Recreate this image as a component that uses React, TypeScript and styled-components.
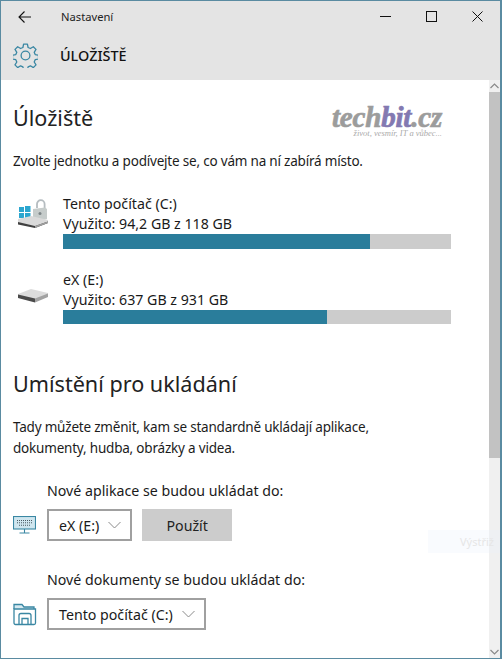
import React from "react"
import styled, { createGlobalStyle } from "styled-components"

const Global = createGlobalStyle`
  html, body {
    margin: 0;
    padding: 0;
    background: #fff;
  }
`

const Win = styled.div`
  width: 502px;
  height: 659px;
  box-sizing: border-box;
  border: 1px solid #5a8ba1;
  border-right-width: 2px;
  display: flex;
  flex-direction: column;
  overflow: hidden;
  font-family: "Noto Sans", "Open Sans", sans-serif;
  color: #1a1a1a;
  position: relative;
`

const Head = styled.div`
  height: 79px;
  flex: none;
  background: #e4e4e4;
  display: flex;
  flex-direction: column;
`

const TitleBar = styled.div`
  height: 31px;
  display: flex;
  align-items: center;
  padding-left: 17px;
`

const AppName = styled.span`
  font-size: 11.2px;
  margin-left: 30px;
  color: #222;
`

const WinButtons = styled.div`
  margin-left: auto;
  display: flex;
  gap: 35px;
  padding-right: 17px;
  align-items: center;
`

const PageBar = styled.div`
  flex: 1;
  display: flex;
  align-items: center;
  padding: 0 0 2px 12px;
`

const PageTitle = styled.span`
  font-size: 14.4px;
  font-weight: 500;
  margin-left: 22px;
  color: #111;
`

const Body = styled.div`
  flex: 1;
  display: flex;
  min-height: 0;
`

const Content = styled.div`
  flex: 1;
  padding: 23px 0 0 12px;
  position: relative;
`

const H1 = styled.h1<{ $top?: number }>`
  margin: ${(p) => p.$top ?? 0}px 0 0;
  font-size: 21.6px;
  font-weight: 400;
  line-height: 30px;
  color: #222;
`

const Para = styled.p`
  margin: 18px 0 0;
  font-size: 13.5px;
  letter-spacing: -0.2px;
  line-height: 21px;
  color: #1c1c1c;
`

const Drives = styled.div`
  margin-top: 22px;
  display: flex;
  flex-direction: column;
  gap: 21px;
`

const Drive = styled.div`
  display: flex;
`

const DriveIconBox = styled.div<{ $top: number }>`
  width: 50px;
  flex: none;
  padding: ${(p) => p.$top}px 0 0 5px;
  box-sizing: border-box;
`

const DriveInfo = styled.div`
  width: 388px;
`

const DriveLine = styled.div`
  font-size: 14.2px;
  line-height: 20px;
`

const Bar = styled.div`
  height: 14.5px;
  background: #cccccc;
`

const Fill = styled.div`
  height: 100%;
  background: #2a7d9b;
`

const Setting = styled.div<{ $top: number }>`
  margin-top: ${(p) => p.$top}px;
  display: grid;
  grid-template-columns: 34px auto;
  row-gap: 8px;
  align-items: center;
`

const SettingLabel = styled.div`
  grid-column: 2;
  font-size: 14.2px;
  line-height: 20px;
`

const Controls = styled.div`
  grid-column: 2;
  display: flex;
  gap: 10px;
`

const Select = styled.div`
  height: 32px;
  box-sizing: border-box;
  border: 2px solid #a0a0a0;
  display: flex;
  align-items: center;
  padding: 0 9px 0 10px;
  gap: 9px;
  font-size: 14.2px;
`

const Apply = styled.div`
  width: 90px;
  height: 32px;
  background: #cccccc;
  display: flex;
  align-items: center;
  justify-content: center;
  font-size: 14.2px;
  color: #222;
`

const Ghost = styled.div`
  position: absolute;
  right: -11px;
  top: 450px;
  width: 72px;
  height: 23px;
  background: rgba(232, 240, 252, 0.25);
  font-size: 11px;
  line-height: 23px;
  color: #e6e6e6;
  padding-left: 32px;
  box-sizing: border-box;
  white-space: nowrap;
`

const Logo = styled.div`
  position: absolute;
  top: 27px;
  left: 331px;
  font-family: "Liberation Serif", serif;
  font-weight: 700;
  font-style: italic;
  font-size: 29px;
  line-height: 21px;
  letter-spacing: -0.2px;
  color: #9c9c9c;
  -webkit-text-stroke: 0.7px currentColor;
  em {
    color: #8379b1;
  }
`

const Slogan = styled.div`
  font-family: "Liberation Serif", serif;
  font-weight: 400;
  font-size: 8.5px;
  line-height: 9px;
  letter-spacing: 0;
  text-align: right;
  color: #aaa;
  -webkit-text-stroke: 0;
  margin-top: 1px;
`

const Scroll = styled.div`
  width: 11px;
  flex: none;
  background: #f0f0f0;
  display: flex;
  flex-direction: column;
  align-items: stretch;
`

const ScrollCap = styled.div`
  height: 12px;
  flex: none;
  display: flex;
  align-items: center;
  justify-content: center;
`

const Thumb = styled.div`
  height: 366px;
  flex: none;
  background: #c2c2c2;
`

const Spacer = styled.div`
  flex: 1;
`

const Stroke = styled.svg`
  display: block;
  flex: none;
`

function Chevron({ up = false, color = "#8a8a8a" }: { up?: boolean; color?: string }) {
  return (
    <Stroke width="9" height="6" viewBox="0 0 9 6" fill="none" stroke={color} strokeWidth="1.2">
      <path d={up ? "M0.5 5L4.5 1L8.5 5" : "M0.5 1L4.5 5L8.5 1"} />
    </Stroke>
  )
}

function SelectChevron() {
  return (
    <Stroke width="13" height="8" viewBox="0 0 13 8" fill="none" stroke="#8a8a8a" strokeWidth="1">
      <path d="M0.5 1L6.5 7L12.5 1" />
    </Stroke>
  )
}

function BackArrow() {
  return (
    <Stroke width="13" height="12" viewBox="0 0 13 12" fill="none" stroke="#111" strokeWidth="1.1">
      <path d="M13 6H1M6.5 0.5L1 6L6.5 11.5" />
    </Stroke>
  )
}

function Gear() {
  return (
    <Stroke width="25" height="25" viewBox="0 0 25 25" fill="none" stroke="#3a87a3" strokeWidth="1.3" strokeLinejoin="round">
      <path d="M10.6 1.2h3.8l.7 3.3 2.3 1 2.9-1.8 2.7 2.7-1.8 2.9 1 2.3 3.3.7v3.7l-3.3.7-1 2.3 1.8 2.9-2.7 2.7-2.9-1.8-2.3 1-.7 3.2h-3.8l-.7-3.2-2.3-1-2.9 1.8-2.7-2.7 1.8-2.9-1-2.3-3.3-.7v-3.7l3.3-.7 1-2.3-1.8-2.9 2.7-2.7 2.9 1.8 2.3-1z" />
      <circle cx="12.5" cy="12.5" r="4.4" />
    </Stroke>
  )
}

function SystemDrive() {
  return (
    <Stroke width="30" height="29" viewBox="0 0 30 29">
      <rect x="1" y="8" width="5" height="5" fill="#2ba6cf" />
      <rect x="7" y="7" width="5.5" height="6" fill="#2ba6cf" />
      <rect x="1" y="14" width="5" height="5" fill="#2ba6cf" />
      <rect x="7" y="14" width="5.5" height="6" fill="#2ba6cf" />
      <path d="M19 9V5a3.8 3.8 0 0 1 7.6 0v4" fill="none" stroke="#b5bcc0" strokeWidth="1.8" />
      <path d="M15 10L27 8.5L29 10V20L18 23L15 21Z" fill="#c6cccb" />
      <circle cx="22" cy="14.5" r="1.5" fill="#7d8588" />
      <path d="M0 20L13 17L30 21V23L17 27L0 24Z" fill="#dadada" />
      <path d="M0 23L17 27L30 22.5V24L17 29L0 25.5Z" fill="#404040" />
      <path d="M17 27L30 22.5V24L17 29Z" fill="#a0a0a0" />
    </Stroke>
  )
}

function PlainDrive() {
  return (
    <Stroke width="30" height="15" viewBox="0 0 30 15">
      <path d="M0 6L13 1L30 5V8L17 13L0 9Z" fill="#dcdcdc" />
      <path d="M0 6.5L17 10.5L17 14.5L0 10Z" fill="#4a4a4a" />
      <path d="M17 10.5L30 5.5V9L17 14.5Z" fill="#a2a2a2" />
    </Stroke>
  )
}

function Monitor() {
  return (
    <Stroke width="23" height="18" viewBox="0 0 23 18" fill="none" stroke="#3a87a3" strokeWidth="1.1">
      <rect x="0.5" y="0.5" width="22" height="12.5" fill="#cfe6ef" />
      <path d="M11.5 13v3.5M6.5 17h10" />
      <path d="M4 4.5h15M4 6.8h15M6 9.2h11" stroke="#4a5a62" strokeDasharray="1 1" />
    </Stroke>
  )
}

function Folder() {
  return (
    <Stroke width="24" height="23" viewBox="0 0 24 23" fill="none" stroke="#3a87a3" strokeWidth="1.3">
      <path d="M1 6V1.5h8l2 2.5h10V6" fill="#d6e9f1" />
      <path d="M1 6h21.5v14a1.5 1.5 0 0 1-1.5 1.5H2.5A1.5 1.5 0 0 1 1 20Z" />
      <path d="M6 21.5V12.5a2 2 0 0 1 2-2h8a2 2 0 0 1 2 2v9M9 21.5v-6h6v6" />
    </Stroke>
  )
}

export default function App() {
  return (
    <Win>
      <Global />
      <Head>
        <TitleBar>
          <BackArrow />
          <AppName>Nastavení</AppName>
          <WinButtons>
            <Stroke width="11" height="11" viewBox="0 0 11 11" fill="none" stroke="#111">
              <path d="M0 5.5H11" />
            </Stroke>
            <Stroke width="11" height="11" viewBox="0 0 11 11" fill="none" stroke="#111">
              <rect x="0.5" y="0.5" width="10" height="10" />
            </Stroke>
            <Stroke width="11" height="11" viewBox="0 0 11 11" fill="none" stroke="#111">
              <path d="M0.5 0.5L10.5 10.5M10.5 0.5L0.5 10.5" />
            </Stroke>
          </WinButtons>
        </TitleBar>
        <PageBar>
          <Gear />
          <PageTitle>ÚLOŽIŠTĚ</PageTitle>
        </PageBar>
      </Head>
      <Body>
        <Content>
          <Logo>
            tech<em>bit</em>.cz
            <Slogan>život, vesmír, IT a vůbec...</Slogan>
          </Logo>
          <H1>Úložiště</H1>
          <Para>Zvolte jednotku a podívejte se, co vám na ní zabírá místo.</Para>
          <Drives>
            <Drive>
              <DriveIconBox $top={5}>
                <SystemDrive />
              </DriveIconBox>
              <DriveInfo>
                <DriveLine>Tento počítač (C:)</DriveLine>
                <DriveLine>Využito: 94,2 GB z 118 GB</DriveLine>
                <Bar>
                  <Fill style={{ width: "79.1%" }} />
                </Bar>
              </DriveInfo>
            </Drive>
            <Drive>
              <DriveIconBox $top={18}>
                <PlainDrive />
              </DriveIconBox>
              <DriveInfo>
                <DriveLine>eX (E:)</DriveLine>
                <DriveLine>Využito: 637 GB z 931 GB</DriveLine>
                <Bar>
                  <Fill style={{ width: "68%" }} />
                </Bar>
              </DriveInfo>
            </Drive>
          </Drives>
          <H1 $top={45}>Umístění pro ukládání</H1>
          <Para>
            Tady můžete změnit, kam se standardně ukládají aplikace,
            <br />
            dokumenty, hudba, obrázky a videa.
          </Para>
          <Setting $top={22}>
            <SettingLabel>Nové aplikace se budou ukládat do:</SettingLabel>
            <Monitor />
            <Controls>
              <Select>
                eX (E:) <SelectChevron />
              </Select>
              <Apply>Použít</Apply>
            </Controls>
          </Setting>
          <Setting $top={29}>
            <SettingLabel>Nové dokumenty se budou ukládat do:</SettingLabel>
            <Folder />
            <Controls>
              <Select>
                Tento počítač (C:) <SelectChevron />
              </Select>
            </Controls>
          </Setting>
          <Ghost>Výstřiž</Ghost>
        </Content>
        <Scroll>
          <ScrollCap>
            <Chevron up />
          </ScrollCap>
          <Thumb />
          <Spacer />
          <ScrollCap>
            <Chevron />
          </ScrollCap>
        </Scroll>
      </Body>
    </Win>
  )
}
